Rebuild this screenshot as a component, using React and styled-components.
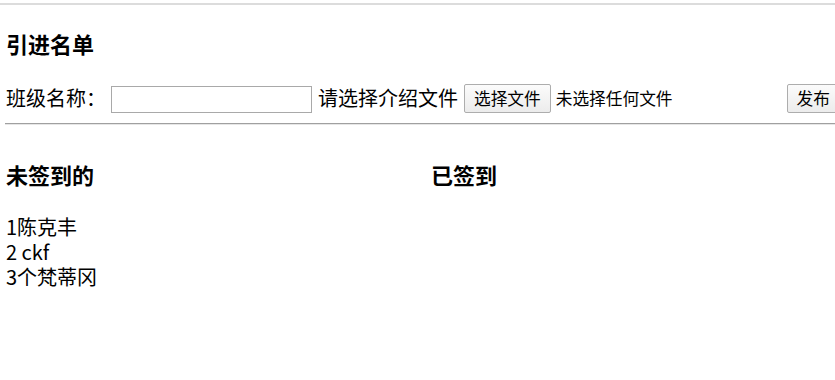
import styled, { createGlobalStyle } from 'styled-components';

const GlobalStyle = createGlobalStyle`
  body {
    margin: 0;
    overflow: hidden;
    background: #fff;
    color: #000;
    font-family: "Noto Sans CJK SC", "Noto Sans", sans-serif;
  }
`;

const unsigned = ['1陈克丰', '2 ckf', '3个梵蒂冈'];

export default function App() {
  return (
    <>
      <GlobalStyle />
      <TopRule />
      <Page>
        <Title>引进名单</Title>
        <Toolbar>
          <Label>班级名称：</Label>
          <TextInput type="text" />
          <Label>请选择介绍文件</Label>
          <FileButton as="label">
            选择文件
            <HiddenFile type="file" />
          </FileButton>
          <FileName>未选择任何文件</FileName>
          <FileButton $push>发布</FileButton>
        </Toolbar>
        <Divider />
        <Columns>
          <Column>
            <Title $small>未签到的</Title>
            <List>
              {unsigned.map((name) => (
                <Item key={name}>{name}</Item>
              ))}
            </List>
          </Column>
          <Column>
            <Title $small>已签到</Title>
          </Column>
        </Columns>
      </Page>
    </>
  );
}

const TopRule = styled.div`
  height: 2px;
  margin-top: 3px;
  background-color: #dcdcdc;
`;

const Page = styled.div`
  padding-left: 6px;
  width: 900px;
`;

const Title = styled.h3`
  margin: ${(p) => (p.$small ? '0' : '23px 0 0')};
  font-size: 22px;
  font-weight: 700;
  line-height: 30px;
`;

const Toolbar = styled.div`
  display: flex;
  align-items: center;
  height: 30px;
  margin-top: 25px;
  font-size: 20px;
  white-space: nowrap;
`;

const Label = styled.span`
  margin-right: 5px;
  line-height: 30px;
`;

const TextInput = styled.input`
  box-sizing: border-box;
  width: 201px;
  height: 27px;
  margin: 3px 6px 0 0;
  padding: 0 4px;
  border: 1px solid #a9a9a9;
  border-radius: 0;
  outline: none;
`;

const FileButton = styled.button`
  box-sizing: border-box;
  display: inline-flex;
  align-items: center;
  height: 29px;
  margin-left: ${(p) => (p.$push ? '114px' : '1px')};
  padding: 0 9px;
  border: 1px solid #adadad;
  border-radius: 2px;
  background: linear-gradient(#fbfbfb, #ececec);
  color: #000;
  font-family: inherit;
  font-size: 16.7px;
  cursor: pointer;
`;

const HiddenFile = styled.input`
  display: none;
`;

const FileName = styled.span`
  margin-left: 5px;
  font-size: 16.7px;
`;

const Divider = styled.hr`
  margin: 10px 0 0 -1px;
  border: 0;
  border-top: 1px solid #a0a0a0;
  border-bottom: 1px solid #e6e6e6;
`;

const Columns = styled.div`
  display: grid;
  grid-template-columns: 425px 1fr;
  margin-top: 34px;
`;

const Column = styled.div``;

const List = styled.div`
  margin-top: 25px;
  font-size: 20px;
  line-height: 25px;
`;

const Item = styled.div``;
